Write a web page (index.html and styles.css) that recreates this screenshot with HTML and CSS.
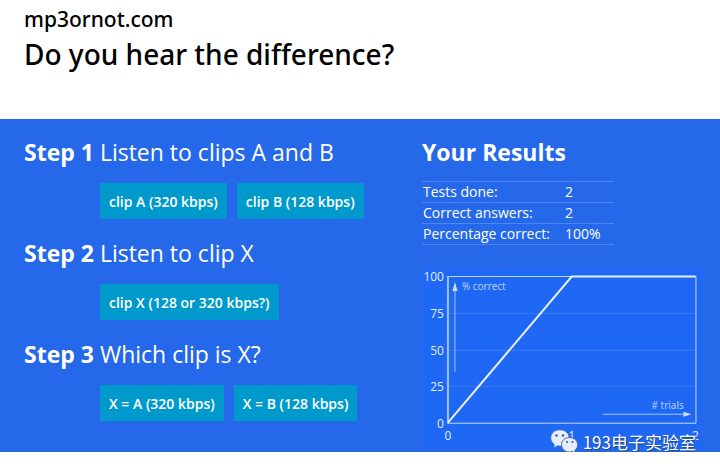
FILE: index.html
```html
<!DOCTYPE html>
<html lang="en">
<head>
<meta charset="utf-8">
<title>mp3ornot.com</title>
<link rel="stylesheet" href="styles.css">
</head>
<body>
<header class="site-header">
  <p class="site-name">mp3ornot.com</p>
  <h1 class="site-title">Do you hear the difference?</h1>
</header>
<main class="test">
  <div class="steps">
    <section class="step">
      <h2 class="heading"><b>Step 1</b> Listen to clips A and B</h2>
      <div class="actions">
        <button type="button" class="clip">clip A (320 kbps)</button>
        <button type="button" class="clip">clip B (128 kbps)</button>
      </div>
    </section>
    <section class="step">
      <h2 class="heading"><b>Step 2</b> Listen to clip X</h2>
      <div class="actions">
        <button type="button" class="clip">clip X (128 or 320 kbps?)</button>
      </div>
    </section>
    <section class="step">
      <h2 class="heading"><b>Step 3</b> Which clip is X?</h2>
      <div class="actions">
        <button type="button" class="clip">X = A (320 kbps)</button>
        <button type="button" class="clip">X = B (128 kbps)</button>
      </div>
    </section>
  </div>
  <section class="results">
    <h2 class="heading"><b>Your Results</b></h2>
    <table class="scores">
      <tr><th scope="row">Tests done:</th><td>2</td></tr>
      <tr><th scope="row">Correct answers:</th><td>2</td></tr>
      <tr><th scope="row">Percentage correct:</th><td>100%</td></tr>
    </table>
    <svg class="chart" viewBox="0 0 280 180" role="img" aria-label="Percentage correct by number of trials">
      <rect class="chart-bg" width="280" height="180"/>
      <path class="grid" d="M27 44.500H274M27 81.500H274M27 117.500H274"/>
      <path class="frame" d="M26 7.500H274.500V154.500H26"/>
      <path class="axis" d="M26 7V155"/>
      <path class="series" d="M26 154L150 7.500H274"/>
      <path class="arrow" d="M33 103V18M181 145.500H265"/>
      <path class="arrow-head" d="M33 13L30.500 22H35.500ZM270 145.500L262 143V148Z"/>
      <g class="ticks y">
        <text x="22" y="12">100</text>
        <text x="22" y="49">75</text>
        <text x="22" y="86">50</text>
        <text x="22" y="122">25</text>
        <text x="22" y="159">0</text>
      </g>
      <g class="ticks x">
        <text x="26" y="171">0</text>
        <text x="150" y="171">1</text>
        <text x="274" y="171">2</text>
      </g>
      <text class="note" x="40" y="21">% correct</text>
      <text class="note" x="230" y="140"># trials</text>
    </svg>
    <div class="watermark">
      <svg class="bubbles" viewBox="0 0 28 25" aria-hidden="true">
        <path class="bubble" d="M10 1C4.500 1 1 4.500 1 9c0 2.700 1.300 4.800 3.500 6.300L4 18.500l3.500-1.900c4 .9 7 .1 9.300-2C18.700 12.900 19.300 11 19 8.500 18.600 4.200 15 1 10 1Z"/>
        <path class="bubble front" d="M19.500 8.500c-4.700 0-8 3.200-8 7.200s3.300 7.300 8 7.300c1 0 2-.2 3-.5l3 1.700-.7-2.800c1.800-1.400 2.900-3.300 2.900-5.700 0-4-3.600-7.200-8.200-7.200Z"/>
        <g class="eye"><circle cx="6.500" cy="6.500" r="1.300"/><circle cx="13" cy="6.500" r="1.300"/><circle cx="17" cy="13" r="1.100"/><circle cx="22.500" cy="13" r="1.100"/></g>
      </svg>
      <span>193电子实验室</span>
    </div>
  </section>
</main>
</body>
</html>
```
FILE: styles.css
```css
* { box-sizing: border-box; }
body {
  margin: 0;
  background: #fff;
  color: #000;
  font-family: "Open Sans", "Noto Sans", "Noto Sans CJK SC", sans-serif;
}
.site-header {
  padding: 5px 24px 45px;
  font-family: "Noto Sans", sans-serif;
  font-weight: 500;
}
.site-name { margin: 0; font-size: 21px; line-height: 29px; }
.site-title { margin: 0; font-size: 28px; line-height: 40px; font-weight: 500; }
.test {
  display: grid;
  grid-template-columns: 398fr 274fr;
  padding: 17px 24px 0;
  background: #2568e9;
  color: #fff;
}
.steps { display: flex; flex-direction: column; gap: 18px; }
.heading { margin: 0; font-size: 23px; line-height: 32px; font-weight: 400; }
.heading b { font-weight: 700; }
.actions { display: flex; gap: 10px; margin: 15px 0 0 76px; }
.clip {
  height: 36px;
  padding: 0 9px;
  border: 0;
  background: #0099cc;
  color: #fff;
  font-family: inherit;
  font-size: 14px;
  font-weight: 600;
}
.results { position: relative; }
.scores {
  width: 192px;
  margin-top: 13px;
  border-collapse: collapse;
  font-size: 14px;
  line-height: 20px;
}
.scores th, .scores td {
  padding: 0 0 0 1px;
  border: solid #4b86f2;
  border-width: 1px 0;
  text-align: left;
  font-weight: 400;
}
.scores td { width: 50px; }
.chart { display: block; width: 102%; margin: 24px 0 3px; overflow: visible; }
.chart-bg { fill: #1f68f4; }
.grid, .frame, .axis, .series, .arrow { fill: none; }
.grid { stroke: #3a7cf6; }
.frame { stroke: #c5dafc; }
.axis { stroke: #9cc2fb; stroke-width: 2; }
.series { stroke: #e8f2ff; stroke-width: 2; }
.arrow { stroke: #a4c3fb; }
.arrow-head { fill: #d0e1fd; }
.ticks { fill: #e1ecff; font-size: 12px; }
.y { text-anchor: end; }
.x { text-anchor: middle; }
.note { fill: #b2cdfc; font-family: "Noto Sans", sans-serif; font-size: 10px; }
.watermark {
  position: absolute;
  right: 0;
  bottom: -3px;
  display: flex;
  align-items: center;
  gap: 5px;
  font-family: "Noto Sans CJK SC", sans-serif;
  font-size: 17px;
  line-height: 26px;
  white-space: nowrap;
  text-shadow: 1px 1px 1px #23447f;
}
.bubbles { width: 28px; height: 25px; }
.bubble { fill: #e8effc; stroke: #6084c5; stroke-width: 0.500; }
.front { stroke: #45659f; stroke-width: 1; }
.eye { fill: #365eae; }
```
